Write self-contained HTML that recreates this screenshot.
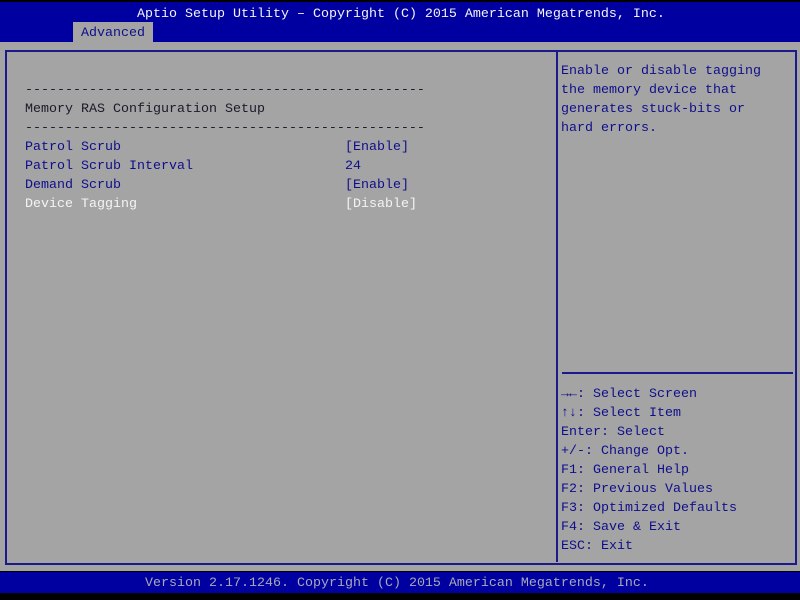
<!DOCTYPE html>
<html><head><style>
body{margin:0;width:800px;height:600px;background:#000;position:relative;overflow:hidden;font-family:"Liberation Mono","DejaVu Sans Mono",monospace;font-size:13.33px;}
div{position:absolute;white-space:pre;}
.t{line-height:19px;height:19px;margin-top:1px;}
.b{color:#0e0e8c}
.k{color:#1a1a2a}
.w{color:#f4f4f4}
</style></head><body>
<div style="left:0;top:2px;width:800px;height:40px;background:#0000a0"></div>
<div style="left:0;top:42px;width:800px;height:529px;background:#a4a4a4"></div>
<div style="left:0;top:572px;width:800px;height:21px;background:#0000a0"></div>
<div style="left:73px;top:22px;width:80px;height:20px;background:#a4a4a4"></div>
<div class="t w" style="left:137px;top:4px;">Aptio Setup Utility – Copyright (C) 2015 American Megatrends, Inc.</div>
<div class="t b" style="left:81px;top:23px;">Advanced</div>
<div style="left:5px;top:50px;width:788px;height:511px;border:2px solid #1a1a8c"></div>
<div style="left:556px;top:51px;width:2px;height:511px;background:#1a1a8c"></div>
<div style="left:562px;top:372px;width:231px;height:2px;background:#1a1a8c"></div>
<div class="t k" style="left:25px;top:80px;">--------------------------------------------------</div>
<div class="t k" style="left:25px;top:99px;">Memory RAS Configuration Setup</div>
<div class="t k" style="left:25px;top:118px;">--------------------------------------------------</div>
<div class="t b" style="left:25px;top:137px;">Patrol Scrub</div>
<div class="t b" style="left:25px;top:156px;">Patrol Scrub Interval</div>
<div class="t b" style="left:25px;top:175px;">Demand Scrub</div>
<div class="t w" style="left:25px;top:194px;">Device Tagging</div>
<div class="t b" style="left:345px;top:137px;">[Enable]</div>
<div class="t b" style="left:345px;top:156px;">24</div>
<div class="t b" style="left:345px;top:175px;">[Enable]</div>
<div class="t w" style="left:345px;top:194px;">[Disable]</div>
<div class="t b" style="left:561px;top:61px;">Enable or disable tagging</div>
<div class="t b" style="left:561px;top:80px;">the memory device that</div>
<div class="t b" style="left:561px;top:99px;">generates stuck-bits or</div>
<div class="t b" style="left:561px;top:118px;">hard errors.</div>
<div class="t b" style="left:561px;top:384px;"><b>→←</b>: Select Screen</div>
<div class="t b" style="left:561px;top:403px;"><b>↑↓</b>: Select Item</div>
<div class="t b" style="left:561px;top:422px;">Enter: Select</div>
<div class="t b" style="left:561px;top:441px;">+/-: Change Opt.</div>
<div class="t b" style="left:561px;top:460px;">F1: General Help</div>
<div class="t b" style="left:561px;top:479px;">F2: Previous Values</div>
<div class="t b" style="left:561px;top:498px;">F3: Optimized Defaults</div>
<div class="t b" style="left:561px;top:517px;">F4: Save &amp; Exit</div>
<div class="t b" style="left:561px;top:536px;">ESC: Exit</div>
<div class="t" style="left:145px;top:573px;color:#a8a8b8">Version 2.17.1246. Copyright (C) 2015 American Megatrends, Inc.</div>
</body></html>
